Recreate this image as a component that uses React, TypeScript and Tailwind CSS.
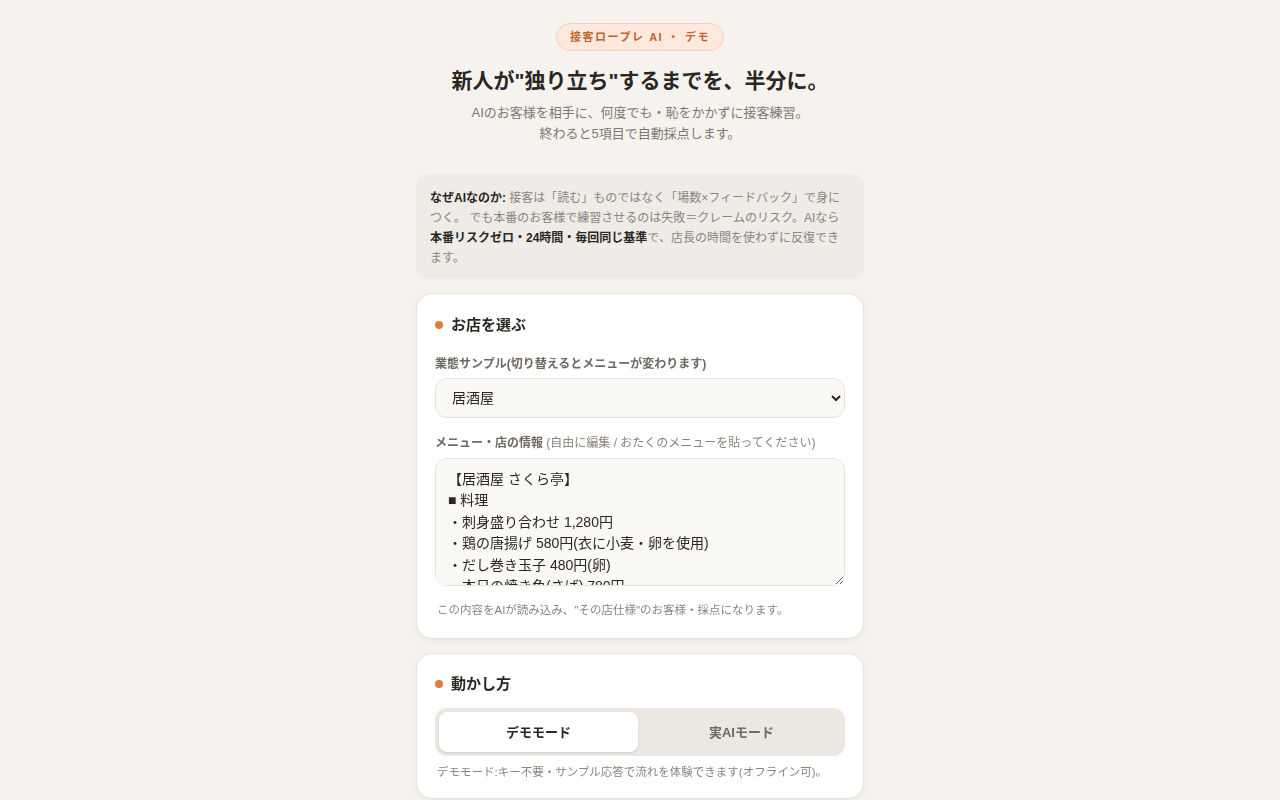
import { useState } from 'react'

const MENU_TEXT = `【居酒屋 さくら亭】
■ 料理
・刺身盛り合わせ 1,280円
・鶏の唐揚げ 580円(衣に小麦・卵を使用)
・だし巻き玉子 480円(卵)
・本日の焼き魚(さば) 780円
・枝豆 380円
■ 飲み物
・生ビール 550円
・ハイボール 450円`

function SectionTitle({ children }: { children: React.ReactNode }) {
  return (
    <h2 className="flex items-center gap-2 text-[15px] font-bold text-[#2a2723]">
      <span className="w-2 h-2 rounded-full bg-[#e07a3f]" />
      {children}
    </h2>
  )
}

export default function App() {
  const [mode, setMode] = useState<'demo' | 'real'>('demo')
  const [shop, setShop] = useState('izakaya')
  const [menu, setMenu] = useState(MENU_TEXT)

  return (
    <div
      className="min-h-screen bg-[#f6f3ee] text-[#2a2723]"
      style={{ fontFamily: '"Liberation Sans", "Noto Sans CJK JP", sans-serif' }}
    >
      <main className="max-w-[448px] mx-auto pt-[23px] pb-10 flex flex-col">
        {/* Header */}
        <div className="flex flex-col items-center text-center">
          <span className="px-[13px] h-[28px] flex items-center rounded-full bg-[#fce9dc] border border-[#f5d2bb] text-[#c0632f] text-[11px] font-bold tracking-[0.14em]">
            接客ロープレ AI ・ デモ
          </span>
          <h1 className="mt-[14px] text-[21px] leading-[32px] font-bold text-[#2a2723]">
            新人が"独り立ち"するまでを、半分に。
          </h1>
          <p className="mt-[5px] text-[13px] leading-[21px] text-[#7d7872]">
            AIのお客様を相手に、何度でも・恥をかかずに接客練習。
            <br />
            終わると5項目で自動採点します。
          </p>
        </div>

        {/* Why AI */}
        <div className="mt-[30px] rounded-xl bg-[#efece7] px-[14px] pt-[14px] pb-[11px] text-[12px] leading-[20px] text-[#8a857e]">
          <b className="text-[#2a2723]">なぜAIなのか:</b> 接客は「読む」ものではなく「場数×フィードバック」で身につく。 でも本番のお客様で練習させるのは失敗＝クレームのリスク。AIなら
          <b className="text-[#2a2723]">本番リスクゼロ・24時間・毎回同じ基準</b>
          で、店長の時間を使わずに反復できます。
        </div>

        {/* Shop selection */}
        <section className="mt-[14px] rounded-2xl bg-white border border-[#e8e3dc] shadow-[0_2px_6px_rgba(0,0,0,0.06)] px-[18px] pt-[20px] pb-[19px]">
          <SectionTitle>お店を選ぶ</SectionTitle>
          <label className="block mt-[18px] text-[12px] font-bold text-[#6e6963]">
            業態サンプル(切り替えるとメニューが変わります)
          </label>
          <select
            value={shop}
            onChange={(e) => setShop(e.target.value)}
            className="mt-[5px] w-full h-[40px] rounded-xl border border-[#e6e1da] bg-[#faf8f5] px-[12px] text-[14px] text-[#2a2723]"
          >
            <option value="izakaya">居酒屋</option>
            <option value="cafe">カフェ</option>
            <option value="ramen">ラーメン店</option>
          </select>

          <label className="block mt-[16px] text-[12px] text-[#8a857e]">
            <span className="font-bold text-[#6e6963]">メニュー・店の情報</span> (自由に編集 / おたくのメニューを貼ってください)
          </label>
          <textarea
            value={menu}
            onChange={(e) => setMenu(e.target.value)}
            className="mt-[6px] w-full h-[128px] block rounded-xl border border-[#e6e1da] bg-[#faf8f5] px-[12px] pt-[10px] pb-[8px] text-[14px] leading-[21.5px] text-[#2a2723] resize-y"
          />
          <p className="mt-[16px] pl-[2px] text-[11.5px] text-[#8a857e]">
            この内容をAIが読み込み、"その店仕様"のお客様・採点になります。
          </p>
        </section>

        {/* Mode */}
        <section className="mt-[14px] rounded-2xl bg-white border border-[#e8e3dc] shadow-[0_2px_6px_rgba(0,0,0,0.06)] px-[18px] pt-[19px] pb-[16px]">
          <SectionTitle>動かし方</SectionTitle>
          <div className="mt-[13px] grid grid-cols-2 gap-1 p-1 h-[48px] rounded-xl bg-[#ece8e1]">
            <button
              onClick={() => setMode('demo')}
              className={`rounded-lg text-[13px] font-bold ${
                mode === 'demo' ? 'bg-white text-[#2a2723] shadow-sm' : 'text-[#6e6963]'
              }`}
            >
              デモモード
            </button>
            <button
              onClick={() => setMode('real')}
              className={`rounded-lg text-[13px] font-bold ${
                mode === 'real' ? 'bg-white text-[#2a2723] shadow-sm' : 'text-[#6e6963]'
              }`}
            >
              実AIモード
            </button>
          </div>
          <p className="mt-[8px] pl-[2px] text-[11.5px] text-[#8a857e]">
            デモモード:キー不要・サンプル応答で流れを体験できます(オフライン可)。
          </p>
        </section>
      </main>
    </div>
  )
}
